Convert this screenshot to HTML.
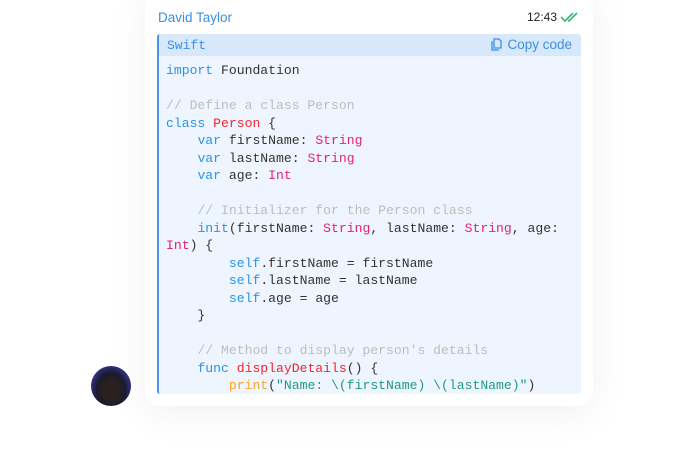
<!DOCTYPE html>
<html><head><meta charset="utf-8"><style>
body{margin:0;width:686px;height:454px;background:#fff;position:relative;overflow:hidden;font-family:"Liberation Sans",sans-serif}
.card{position:absolute;left:145px;top:-16px;width:448px;height:422px;background:#fff;border-radius:16px;box-shadow:0 8px 40px rgba(0,0,0,0.06)}
.name{position:absolute;left:158px;top:10px;color:#3b8fe6;font-size:13.5px}
.time{position:absolute;left:527px;top:10px;color:#222;font-size:12px}
.code{position:absolute;left:157px;top:34px;width:422px;height:360px;background:#eef5fe;border-left:2px solid #4a94ec;border-radius:3px;overflow:hidden}
.hdr{height:22px;background:#d7e8fb;position:relative;font-family:"Liberation Mono",monospace;color:#3b8fe6;font-size:13px}
.hdr .l{position:absolute;left:8px;top:4px}
.hdr .r{position:absolute;right:9px;top:3px;font-family:"Liberation Sans",sans-serif;font-size:13.5px}
pre{margin:0;padding:0 0 0 7px;position:absolute;top:28px;font-family:"Liberation Mono",monospace;font-size:13.1px;line-height:17.5px;color:#333}
.k{color:#2a94e6}.n{color:#f0262e}.t{color:#e8207a}.c{color:#bdbdbd}.s{color:#1e9a80}.p{color:#f5a623}
.av{position:absolute;left:91px;top:366px;width:40px;height:40px;border-radius:50%;background:radial-gradient(ellipse at 50% 60%,#2a2020 0 30%,#1a1a2e 50%,#3a3a9a 80%,#2a2a6a)}
</style></head><body>
<div class="card"></div>
<div class="name">David Taylor</div>
<div class="time">12:43</div>
<svg style="position:absolute;left:560px;top:11px" width="20" height="12" viewBox="0 0 20 12"><path d="M1 6l4 4 8-8M8 9l1 1 8-8" fill="none" stroke="#3cb371" stroke-width="1.6"/></svg>
<div class="code">
<div class="hdr"><span class="l">Swift</span><span class="r"><svg width="11" height="13" viewBox="0 0 11 13" style="vertical-align:-2px;margin-right:5px"><path d="M3 1h5l2 2v7H3z M1 3v9h7" fill="none" stroke="#3b8fe6" stroke-width="1.3"/></svg>Copy code</span></div>
<pre><span class="k">import</span> Foundation

<span class="c">// Define a class Person</span>
<span class="k">class</span> <span class="n">Person</span> {
    <span class="k">var</span> firstName: <span class="t">String</span>
    <span class="k">var</span> lastName: <span class="t">String</span>
    <span class="k">var</span> age: <span class="t">Int</span>

    <span class="c">// Initializer for the Person class</span>
    <span class="k">init</span>(firstName: <span class="t">String</span>, lastName: <span class="t">String</span>, age:
<span class="t">Int</span>) {
        <span class="k">self</span>.firstName = firstName
        <span class="k">self</span>.lastName = lastName
        <span class="k">self</span>.age = age
    }

    <span class="c">// Method to display person's details</span>
    <span class="k">func</span> <span class="n">displayDetails</span>() {
        <span class="p">print</span>(<span class="s">"Name: \(firstName) \(lastName)"</span>)
</pre>
</div>
<div class="av"></div>
</body></html>
